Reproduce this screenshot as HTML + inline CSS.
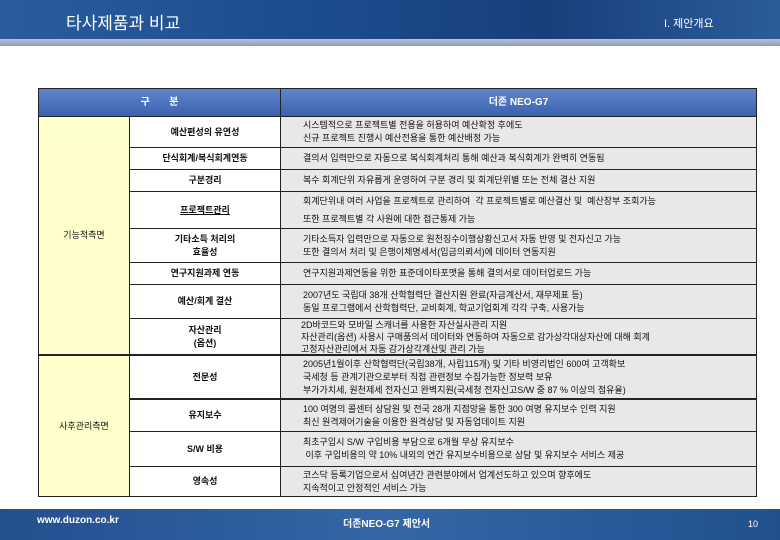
<html><head><style>
body{margin:0;width:780px;height:540px;position:relative;overflow:hidden;background:#fff;font-family:"Liberation Sans","Noto Sans CJK KR",sans-serif;}
.hd{position:absolute;left:0;top:0;width:780px;height:39px;background:linear-gradient(90deg,#2a5c9c,#1d4c8e 40%,#173f7c 70%,#2c5c9a);}
.hs{position:absolute;left:0;top:39px;width:780px;height:7px;background:linear-gradient(#b7c2d2,#8e9db4);}
.t{position:absolute;color:#fff;}
.c{position:absolute;box-sizing:border-box;border-right:1px solid #222;border-bottom:1px solid #222;display:flex;align-items:center;font-size:9px;color:#111;line-height:13px;}
.k{justify-content:center;text-align:center;font-weight:bold;background:#fff;}
.d{background:#e8e8e8;padding-left:22px;}
.y{background:#ffffcc;justify-content:center;}
.ft{position:absolute;left:0;top:509px;width:780px;height:31px;background:linear-gradient(90deg,#244f8f,#3466a8 50%,#22508e);}
</style></head><body>
<div class="hd"></div><div class="hs"></div>
<div class="t" style="left:66px;top:9px;font-size:17px;">타사제품과 비교</div>
<div class="t" style="left:664px;top:15px;font-size:11px;">I. 제안개요</div>
<div style="position:absolute;left:38px;top:88px;width:719px;height:409px;border-left:1px solid #222;border-top:1px solid #222;box-sizing:border-box;"></div>
<div class="c" style="left:38px;top:88px;width:243px;height:29px;background:linear-gradient(#5f85c9,#3c62b0);color:#fff;justify-content:center;font-weight:bold;font-size:10px;border-left:1px solid #222;border-top:1px solid #222;">구 &nbsp; &nbsp; &nbsp; 분</div>
<div class="c" style="left:281px;top:88px;width:476px;height:29px;background:linear-gradient(#5f85c9,#3c62b0);color:#fff;justify-content:center;font-weight:bold;font-size:10px;border-top:1px solid #222;">더존 NEO-G7</div>
<div class="c y" style="left:38px;top:117px;width:92px;height:239px;border-left:1px solid #222;border-bottom:2px solid #222;">기능적측면</div>
<div class="c y" style="left:38px;top:356px;width:92px;height:141px;border-left:1px solid #222;">사후관리측면</div>

<div class="c k" style="left:130px;top:117px;width:151px;height:31px;">예산편성의 유연성</div>
<div class="c d" style="left:281px;top:117px;width:476px;height:31px;">시스템적으로 프로젝트별 전용을 허용하여 예산확정 후에도<br>신규 프로젝트 진행시 예산전용을 통한 예산배정 가능</div>
<div class="c k" style="left:130px;top:148px;width:151px;height:22px;">단식회계/복식회계연동</div>
<div class="c d" style="left:281px;top:148px;width:476px;height:22px;">결의서 입력만으로 자동으로 복식회계처리 통해 예산과 복식회계가 완벽히 연동됨</div>
<div class="c k" style="left:130px;top:170px;width:151px;height:22px;">구분경리</div>
<div class="c d" style="left:281px;top:170px;width:476px;height:22px;">복수 회계단위 자유롭게 운영하여 구분 경리 및 회계단위별 또는 전체 결산 지원</div>
<div class="c k" style="left:130px;top:192px;width:151px;height:37px;text-decoration:underline;">프로젝트관리</div>
<div class="c d" style="left:281px;top:192px;width:476px;height:37px;line-height:18px;">회계단위내 여러 사업을 프로젝트로 관리하여 &nbsp;각 프로젝트별로 예산결산 및 &nbsp;예산장부 조회가능<br>또한 프로젝트별 각 사원에 대한 접근통제 가능</div>
<div class="c k" style="left:130px;top:229px;width:151px;height:34px;">기타소득 처리의<br>효율성</div>
<div class="c d" style="left:281px;top:229px;width:476px;height:34px;">기타소득자 입력만으로 자동으로 원천징수이행상황신고서 자동 반영 및 전자신고 가능<br>또한 결의서 처리 및 은행이체명세서(입금의뢰서)에 데이터 연동지원</div>
<div class="c k" style="left:130px;top:263px;width:151px;height:22px;">연구지원과제 연동</div>
<div class="c d" style="left:281px;top:263px;width:476px;height:22px;">연구지원과제연동을 위한 표준데이타포맷을 통해 결의서로 데이터업로드 가능</div>
<div class="c k" style="left:130px;top:285px;width:151px;height:34px;">예산/회계 결산</div>
<div class="c d" style="left:281px;top:285px;width:476px;height:34px;">2007년도 국립대 38개 산학협력단 결산지원 완료(자금계산서, 재무제표 등)<br>동일 프로그램에서 산학협력단, 교비회계, 학교기업회계 각각 구축, 사용가능</div>
<div class="c k" style="left:130px;top:319px;width:151px;height:37px;border-bottom:2px solid #222;">자산관리<br>(옵션)</div>
<div class="c d" style="left:281px;top:319px;width:476px;height:37px;border-bottom:2px solid #222;padding-left:20px;line-height:12px;">2D바코드와 모바일 스캐너를 사용한 자산실사관리 지원<br>자산관리(옵션) 사용시 구매품의서 데이터와 연동하여 자동으로 감가상각대상자산에 대해 회계<br>고정자산관리에서 자동 감가상각계산및 관리 가능</div>
<div class="c k" style="left:130px;top:356px;width:151px;height:44px;border-bottom:2px solid #222;">전문성</div>
<div class="c d" style="left:281px;top:356px;width:476px;height:44px;border-bottom:2px solid #222;">2005년1월이후 산학협력단(국립38개, 사립115개) 및 기타 비영리법인 600여 고객확보<br>국세청 등 관계기관으로부터 직접 관련정보 수집가능한 정보력 보유<br>부가가치세, 원천제세 전자신고 완벽지원(국세청 전자신고S/W 중 87 % 이상의 점유율)</div>
<div class="c k" style="left:130px;top:400px;width:151px;height:32px;">유지보수</div>
<div class="c d" style="left:281px;top:400px;width:476px;height:32px;">100 여명의 콜센터 상담원 및 전국 28개 지점망을 통한 300 여명 유지보수 인력 지원<br>최신 원격제어기술을 이용한 원격상담 및 자동업데이트 지원</div>
<div class="c k" style="left:130px;top:432px;width:151px;height:35px;">S/W 비용</div>
<div class="c d" style="left:281px;top:432px;width:476px;height:35px;">최초구입시 S/W 구입비용 부담으로 6개월 무상 유지보수<br>&nbsp;이후 구입비용의 약 10% 내외의 연간 유지보수비용으로 상담 및 유지보수 서비스 제공</div>
<div class="c k" style="left:130px;top:467px;width:151px;height:30px;">영속성</div>
<div class="c d" style="left:281px;top:467px;width:476px;height:30px;">코스닥 등록기업으로서 십여년간 관련분야에서 업계선도하고 있으며 향후에도<br>지속적이고 안정적인 서비스 가능</div>

<div class="ft"></div>
<div class="t" style="left:37px;top:515px;font-size:10px;font-weight:bold;">www.duzon.co.kr</div>
<div class="t" style="left:343px;top:515px;font-size:10px;font-weight:bold;">더존NEO-G7 제안서</div>
<div class="t" style="left:748px;top:519px;font-size:9px;">10</div>
</body></html>
